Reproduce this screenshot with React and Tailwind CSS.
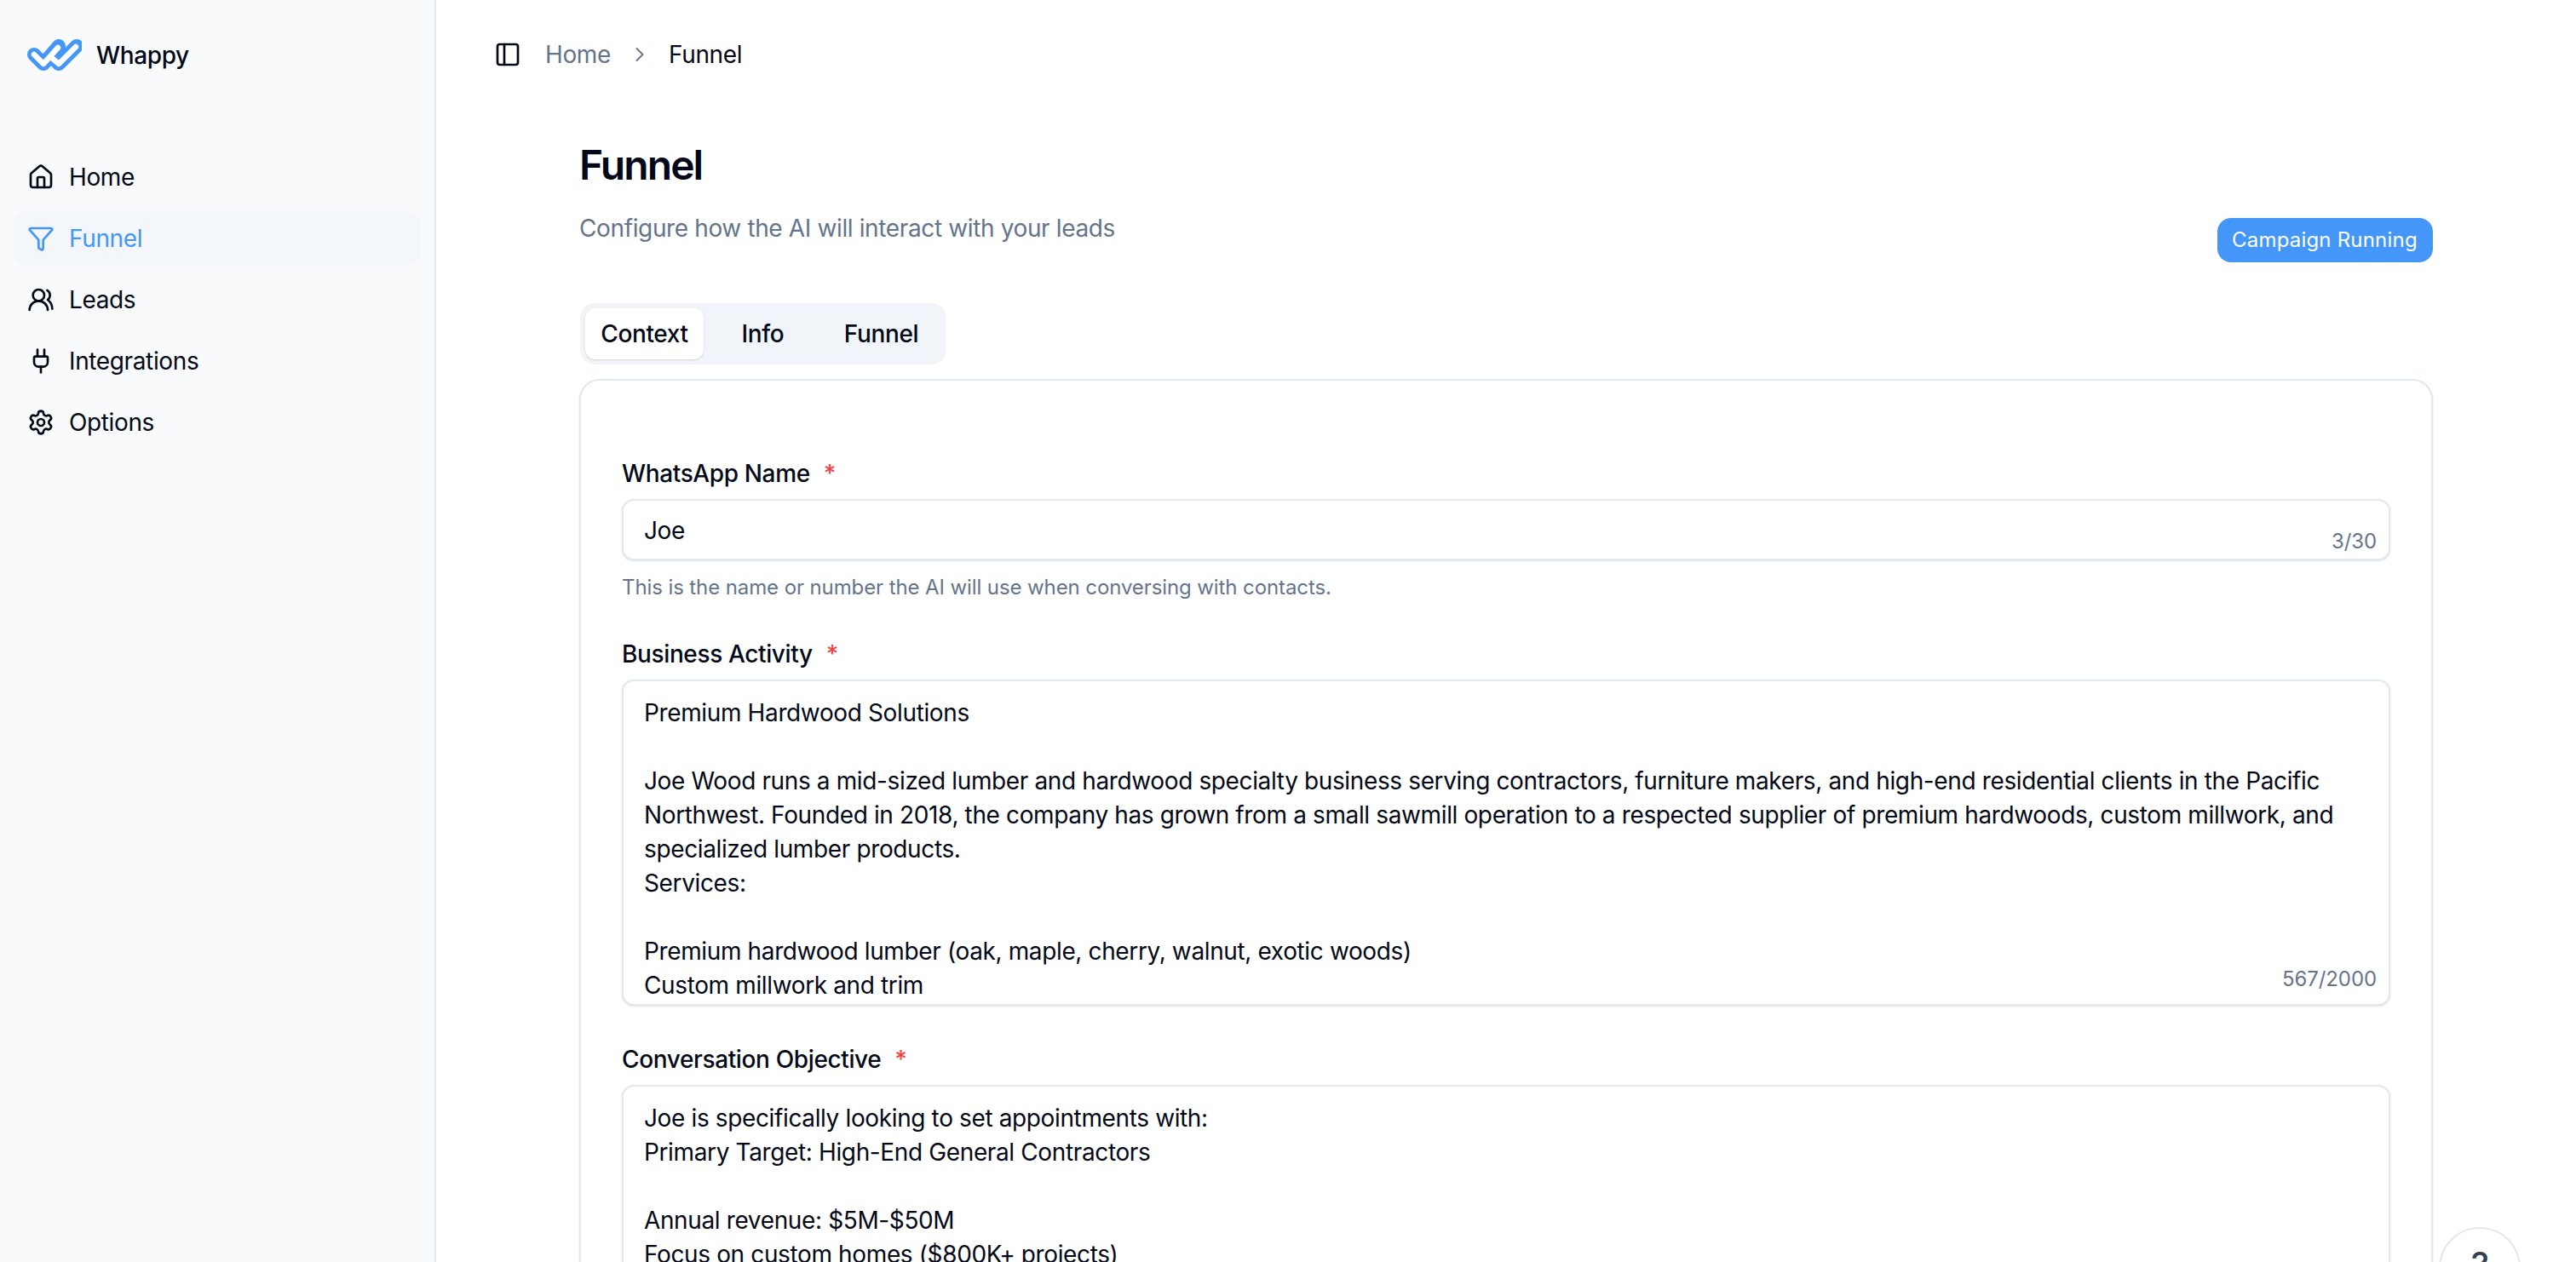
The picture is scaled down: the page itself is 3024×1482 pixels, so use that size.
import { ChevronRight, Funnel, House, PanelLeft, Plug, Settings, UsersRound } from "lucide-react";

const navItems = [
  { label: "Home", icon: House },
  { label: "Funnel", icon: Funnel, active: true },
  { label: "Leads", icon: UsersRound },
  { label: "Integrations", icon: Plug },
  { label: "Options", icon: Settings },
];

const businessText = `Premium Hardwood Solutions

Joe Wood runs a mid-sized lumber and hardwood specialty business serving contractors, furniture makers, and high-end residential clients in the Pacific
Northwest. Founded in 2018, the company has grown from a small sawmill operation to a respected supplier of premium hardwoods, custom millwork, and
specialized lumber products.
Services:

Premium hardwood lumber (oak, maple, cherry, walnut, exotic woods)
Custom millwork and trim`;

const objectiveText = `Joe is specifically looking to set appointments with:
Primary Target: High-End General Contractors

Annual revenue: $5M-$50M
Focus on custom homes ($800K+ projects)`;

function Logo() {
  return (
    <svg width="64" height="38" viewBox="6 6 64 38" fill="none" strokeLinecap="round" strokeLinejoin="round">
      <path d="M14 25 L25 36 L43 15" stroke="#4496f8" strokeWidth="16" />
      <path d="M36 29 L43 36 L64 15" stroke="#4496f8" strokeWidth="16" />
      <path d="M14 25 L25 36 L42 17" stroke="#ffffff" strokeWidth="6.5" />
      <path d="M36 30 L43 36 L63 16" stroke="#ffffff" strokeWidth="6.5" />
    </svg>
  );
}

function Sidebar() {
  return (
    <aside className="w-[512px] shrink-0 h-full border-r-2 border-[#e2e8f0] bg-[#f8fafc]">
      <div className="flex items-center gap-[17px] pl-8 pt-[44px]">
        <Logo />
        <span className="mt-[2px] text-[28px] leading-[38px] font-medium text-[#020817]">Whappy</span>
      </div>
      <nav className="mt-[92px] flex flex-col gap-2 px-4">
        {navItems.map(({ label, icon: Icon, active }) => (
          <div
            key={label}
            className={
              active
                ? "flex h-16 items-center gap-[17px] rounded-2xl bg-[#f3f6fa] pl-4 text-[#4496f8]"
                : "flex h-16 items-center gap-[17px] rounded-2xl pl-4 text-[#020817]"
            }
          >
            <Icon size={32} />
            <span className="text-[28px] leading-10">{label}</span>
          </div>
        ))}
      </nav>
    </aside>
  );
}

function Field({ label, children }) {
  return (
    <div>
      <div className="flex items-center text-[28px] leading-10 font-medium text-[#020817]">
        <span>{label}</span>
        <span className="ml-4 text-[#ef4444]">*</span>
      </div>
      {children}
    </div>
  );
}

export default function App() {
  return (
    <div className="flex h-screen w-full overflow-hidden bg-white font-['Inter',sans-serif] tracking-[-0.37px] text-[#020817]">
      <Sidebar />
      <main className="relative min-w-0 flex-1">
        <header className="flex h-[128px] items-center pl-[68px] text-[28px]">
          <PanelLeft size={32} className="text-[#020817]" />
          <span className="ml-[28px] text-[#64748b]">Home</span>
          <ChevronRight size={28} strokeWidth={1.6} className="mx-[20px] text-[#64748b]" />
          <span>Funnel</span>
        </header>

        <div className="px-[168px] pt-10">
          <div className="mb-12 flex items-end justify-between">
            <div className="pb-5">
              <h1 className="mt-[2px] text-5xl leading-[48px] font-semibold tracking-[-1.9px]">Funnel</h1>
              <p className="mt-[30px] text-[28px] leading-10 text-[#64748b]">Configure how the AI will interact with your leads</p>
            </div>
            <div className="flex h-[52px] w-[253px] items-center rounded-2xl bg-[#4496f8] pl-[17px] text-2xl font-normal tracking-[0.2px] text-white">
              Campaign Running
            </div>
          </div>

          <div className="ml-[1px] grid h-[72px] w-[429px] grid-cols-3 rounded-2xl bg-[#f1f5f9] p-[6px] text-[28px] font-medium">
            <div className="flex items-center justify-center rounded-xl bg-white shadow-sm">Context</div>
            <div className="flex items-center justify-center">Info</div>
            <div className="flex items-center justify-center">Funnel</div>
          </div>

          <section className="mt-[17px] rounded-3xl border-2 border-[#e2e8f0] bg-white px-12 pt-[89px] pb-12 shadow-sm">
            <Field label="WhatsApp Name">
              <div className="relative mt-[10px] flex h-[72px] items-center rounded-[14px] border-2 border-[#e2e8f0] bg-white pt-[2px] pl-6 text-[28px] shadow-sm">
                Joe
                <span className="absolute right-[14px] bottom-[4px] text-2xl leading-8 tracking-[-0.1px] text-[#64748b]">3/30</span>
              </div>
              <p className="mt-4 text-2xl leading-8 tracking-[-0.1px] text-[#64748b]">This is the name or number the AI will use when conversing with contacts.</p>
            </Field>

            <div className="mt-[42px]">
              <Field label="Business Activity">
                <div className="relative mt-[10px] h-[383px] overflow-hidden rounded-[14px] border-2 border-[#e2e8f0] bg-white px-6 pt-[17px] text-[28px] leading-10 whitespace-pre-line shadow-sm">
                  {businessText}
                  <span className="absolute right-[14px] bottom-[13px] text-2xl leading-8 tracking-[-0.1px] text-[#64748b]">567/2000</span>
                </div>
              </Field>
            </div>

            <div className="mt-[43px]">
              <Field label="Conversation Objective">
                <div className="mt-[10px] h-[400px] overflow-hidden rounded-[14px] border-2 border-[#e2e8f0] bg-white px-6 pt-[17px] text-[28px] leading-10 whitespace-pre-line shadow-sm">
                  {objectiveText}
                </div>
              </Field>
            </div>
          </section>
        </div>

        <button className="absolute top-[1441px] right-[65px] flex h-24 w-24 items-center justify-center rounded-full border-2 border-[#e5e7eb] bg-white pb-2 text-[40px] font-medium text-[#334155]">
          ?
        </button>
      </main>
    </div>
  );
}
